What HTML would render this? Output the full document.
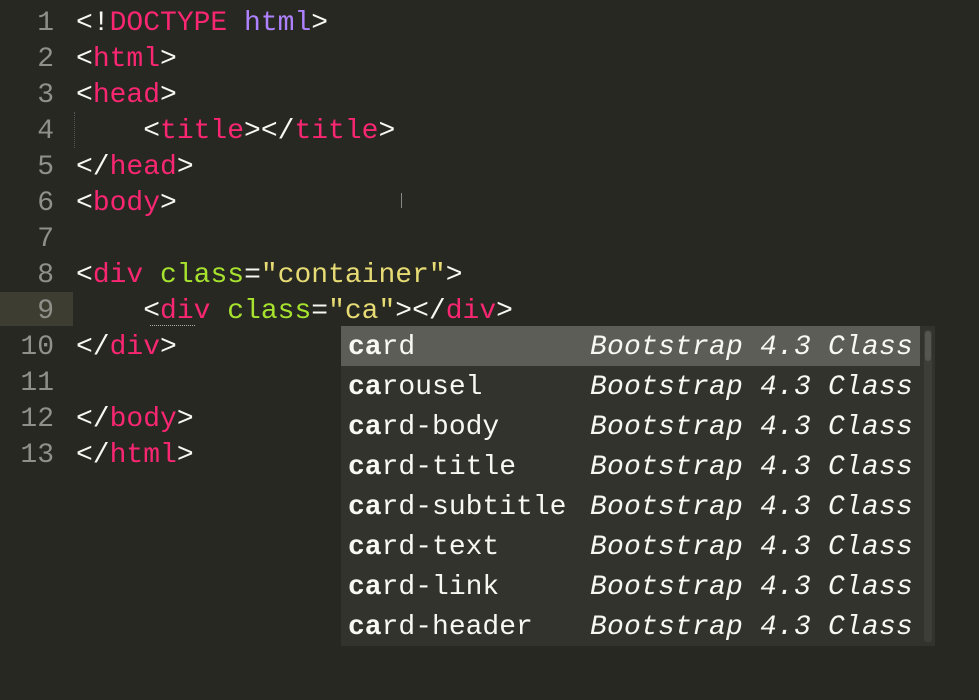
<!DOCTYPE html>
<html><head><style>
body{margin:0;width:979px;height:700px;background:#272822;overflow:hidden;position:relative;font-family:"Liberation Mono","DejaVu Sans Mono",monospace;font-size:28px;color:#f8f8f2}
.ln{position:absolute;left:0;width:54px;text-align:right;color:#8f908a;height:36px;line-height:36px;margin-top:2px}
.cl{position:absolute;left:76px;height:36px;line-height:36px;white-space:pre;margin-top:2px}
.t{color:#f92672}.a{color:#a6e22e}.s{color:#e6db74}.p{color:#ae81ff}
#pop{position:absolute;left:341px;top:326px;width:594px;height:320px;background:#32332d}
.r{height:40px;line-height:44px;padding-left:7px;white-space:pre;position:relative;width:572px}
.r b{font-weight:bold}
.r i{position:absolute;left:249px;top:0;letter-spacing:0.2px}
.sel{background:#5d5d57}
</style></head><body>
<div style="position:absolute;left:0;top:292px;width:73px;height:34px;background:#3e3d32"></div>
<div style="position:absolute;left:74px;top:112px;height:36px;border-left:1px dotted #555"></div>
<div class="ln" style="top:4px">1</div>
<div class="ln" style="top:40px">2</div>
<div class="ln" style="top:76px">3</div>
<div class="ln" style="top:112px">4</div>
<div class="ln" style="top:148px">5</div>
<div class="ln" style="top:184px">6</div>
<div class="ln" style="top:220px">7</div>
<div class="ln" style="top:256px">8</div>
<div class="ln" style="top:292px">9</div>
<div class="ln" style="top:328px">10</div>
<div class="ln" style="top:364px">11</div>
<div class="ln" style="top:400px">12</div>
<div class="ln" style="top:436px">13</div>
<div class="cl" style="top:4px">&lt;!<span class="t">DOCTYPE</span> <span class="p">html</span>&gt;</div>
<div class="cl" style="top:40px">&lt;<span class="t">html</span>&gt;</div>
<div class="cl" style="top:76px">&lt;<span class="t">head</span>&gt;</div>
<div class="cl" style="top:112px">    &lt;<span class="t">title</span>&gt;&lt;/<span class="t">title</span>&gt;</div>
<div class="cl" style="top:148px">&lt;/<span class="t">head</span>&gt;</div>
<div class="cl" style="top:184px">&lt;<span class="t">body</span>&gt;</div>
<div class="cl" style="top:256px">&lt;<span class="t">div</span> <span class="a">class</span>=<span class="s">"container"</span>&gt;</div>
<div class="cl" style="top:292px">    &lt;<span class="t">div</span> <span class="a">class</span>=<span class="s">"ca"</span>&gt;&lt;/<span class="t">div</span>&gt;</div>
<div style="position:absolute;left:150px;top:325px;width:45px;border-top:1px dotted #aaa"></div>
<div class="cl" style="top:328px">&lt;/<span class="t">div</span>&gt;</div>
<div class="cl" style="top:400px">&lt;/<span class="t">body</span>&gt;</div>
<div class="cl" style="top:436px">&lt;/<span class="t">html</span>&gt;</div>
<div style="position:absolute;left:401px;top:193px;width:1px;height:15px;background:#888"></div>
<div id="pop">
<div class="r sel"><b>ca</b>rd<i>Bootstrap 4.3 Class</i></div>
<div class="r"><b>ca</b>rousel<i>Bootstrap 4.3 Class</i></div>
<div class="r"><b>ca</b>rd-body<i>Bootstrap 4.3 Class</i></div>
<div class="r"><b>ca</b>rd-title<i>Bootstrap 4.3 Class</i></div>
<div class="r"><b>ca</b>rd-subtitle<i>Bootstrap 4.3 Class</i></div>
<div class="r"><b>ca</b>rd-text<i>Bootstrap 4.3 Class</i></div>
<div class="r"><b>ca</b>rd-link<i>Bootstrap 4.3 Class</i></div>
<div class="r"><b>ca</b>rd-header<i>Bootstrap 4.3 Class</i></div>
<div style="position:absolute;left:583px;top:4px;width:8px;height:312px;background:#3d3e38;border-radius:3px"></div>
<div style="position:absolute;left:584px;top:5px;width:6px;height:30px;background:#55564f;border-radius:3px"></div>
</div>
</body></html>
